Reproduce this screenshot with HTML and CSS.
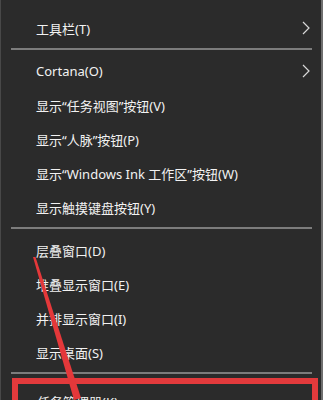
FILE: index.html
```html
<!DOCTYPE html>
<html>

<head>
    <title>Taskbar menu</title>
    <link rel="stylesheet" href="styles.css">
</head>

<body>
    <div class="menu">
        <div class="item">工具栏(T)
            <svg class="arrow" width="8" height="14" viewBox="0 0 8 14"><polyline points="1,1 7,7 1,13" /></svg>
        </div>
        <div class="sep"></div>
        <div class="item">Cortana(O)
            <svg class="arrow" width="8" height="14" viewBox="0 0 8 14"><polyline points="1,1 7,7 1,13" /></svg>
        </div>
        <div class="item">显示“任务视图”按钮(V)</div>
        <div class="item">显示“人脉”按钮(P)</div>
        <div class="item">显示“Windows Ink 工作区”按钮(W)</div>
        <div class="item">显示触摸键盘按钮(Y)</div>
        <div class="sep"></div>
        <div class="item">层叠窗口(D)</div>
        <div class="item">堆叠显示窗口(E)</div>
        <div class="item">并排显示窗口(I)</div>
        <div class="item">显示桌面(S)</div>
        <div class="sep"></div>
        <div class="item marked">任务管理器(K)</div>

        <!-- red pointer drawn over the menu -->
        <svg class="pointer" width="323" height="400" viewBox="0 0 323 400">
            <polygon points="32,257 34.5,257 80,398 73,400" />
        </svg>
    </div>
</body>

</html>
```

FILE: styles.css
```css
body {
    margin: 0;
    background-color: #2b2b2b;
    font-family: "Noto Sans", "Noto Sans CJK SC", sans-serif;
    overflow: hidden;
}

.menu {
    position: relative;
    width: 323px;
    height: 400px;
    box-sizing: border-box;
    padding-top: 11px;
    background-color: #2b2b2b;
    border-left: 1px solid #484848;
    border-right: 2px solid #6e6e6e;
    overflow: hidden;
}

.item {
    height: 34px;
    display: flex;
    align-items: center;
    justify-content: space-between;
    padding-left: 35px;
    padding-right: 11px;
    color: #f2f2f2;
    font-size: 13px;
}

.arrow polyline {
    fill: none;
    stroke: #d8d8d8;
    stroke-width: 1.2;
}

.sep {
    height: 9px;
    margin: 0 9px 0 10px;
    position: relative;
}

.sep::after {
    content: "";
    position: absolute;
    left: 0;
    right: 0;
    top: 3px;
    height: 2px;
    background-color: #7c7c7c;
}

.marked {
    margin: 0 3px 0 11px;
    padding-left: 19px;
    border: 6px solid #e23a3c;
    border-bottom: 0;
    height: 40px;
    box-sizing: border-box;
    align-items: flex-start;
    padding-top: 8px;
}

.pointer {
    position: absolute;
    left: 0;
    top: 0;
}

.pointer polygon {
    fill: #e4383a;
}
```
